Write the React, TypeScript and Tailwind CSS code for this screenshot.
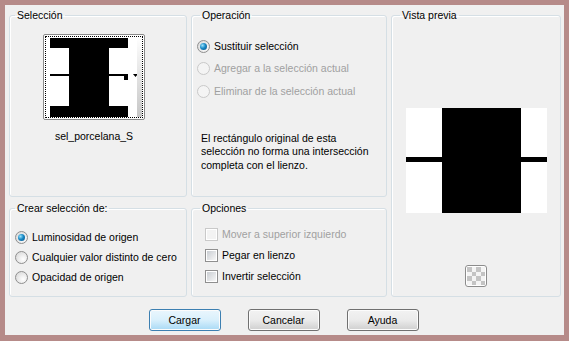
import React from "react";

const Radio = ({ checked, disabled }: { checked?: boolean; disabled?: boolean }) => (
  <span
    className={
      "flex items-center justify-center w-[13px] h-[13px] rounded-full border shrink-0 " +
      (disabled
        ? "border-[#c9c9c9] bg-[#f4f4f4]"
        : "border-[#8f8f8f] bg-[radial-gradient(circle_at_65%_65%,#ffffff,#dcdcdc_80%)]")
    }
  >
    {checked && (
      <span className="w-[7px] h-[7px] rounded-full bg-[radial-gradient(circle_at_35%_35%,#9be3fb,#1889c6_45%,#0a4d80)]" />
    )}
  </span>
);

const Checkbox = ({ disabled }: { disabled?: boolean }) => (
  <span
    className={
      "flex items-center justify-center w-[13px] h-[13px] border shrink-0 bg-white " +
      (disabled ? "border-[#c9c9c9]" : "border-[#8f8f8f]")
    }
  >
    <span
      className={
        "w-[9px] h-[9px] " +
        (disabled ? "bg-[#f3f3f3]" : "bg-linear-to-br from-[#c9cdd2] to-[#f7f7f7]")
      }
    />
  </span>
);

const Btn = ({ label, primary }: { label: string; primary?: boolean }) => (
  <button
    className={
      "w-[72px] h-[22px] rounded-[3px] border text-[10.5px] text-black shadow-[inset_0_0_0_1px_#fcfcfc] " +
      (primary
        ? "border-[#3c7fb1] bg-linear-to-b from-[#eaf6fd] via-[#d9f0fc] to-[#a7d9f5]"
        : "border-[#707070] bg-linear-to-b from-[#f2f2f2] via-[#ebebeb] to-[#cfcfcf]")
    }
  >
    {label}
  </button>
);

export default function App() {
  return (
    <div className="w-[569px] h-[341px] bg-[#b68b89] pt-[5px] pl-[5px] pr-[5px] pb-[6px] font-['Liberation_Sans',Arial,sans-serif] text-[10.5px] leading-[13px] text-black">
      <div className="flex flex-col h-full bg-[#f0f0f0] pl-[4px] pt-[4px]">
        <div className="grid grid-cols-[178px_196px_170px] grid-rows-[188px_95px] gap-x-[4px] gap-y-[5px]">
          {/* Selección */}
          <fieldset className="border border-[#d5dfe5] rounded-[3px] shadow-[inset_1px_1px_0_#fff] min-w-0">
            <legend className="ml-[5px] px-[2px] leading-[13px]">Selección</legend>
            <div className="flex flex-col items-center pr-[8px]">
              <div className="mt-[12px] w-[102px] h-[86px] border border-[#8a8a8a] rounded-[2px] bg-white p-[1px]">
                <div className="flex h-full border border-dotted border-black">
                  <div className="pl-[4px] pt-[1px]">
                    <svg width="78" height="79" viewBox="0 0 78 79">
                      <rect x="0" y="0" width="78" height="79" fill="#fff" />
                      <rect x="0" y="0" width="78" height="10" fill="#000" />
                      <rect x="19" y="0" width="40" height="79" fill="#000" />
                      <rect x="0" y="68" width="78" height="11" fill="#000" />
                      <rect x="0" y="36" width="78" height="2" fill="#000" />
                      <rect x="74" y="36" width="4" height="6" fill="#000" />
                    </svg>
                  </div>
                  <div className="ml-[5px] mt-[37px] flex flex-col items-center w-[6px]">
                    <svg width="5" height="3" viewBox="0 0 5 3">
                      <path d="M0 0h5L2.5 3z" fill="#000" />
                    </svg>
                  </div>
                  <div className="ml-[-1px] w-[5px] h-full bg-linear-to-b from-[#ffffff] to-[#c6c6c6]" />
                </div>
              </div>
              <div className="mt-[10px]">sel_porcelana_S</div>
            </div>
          </fieldset>

          {/* Operación */}
          <fieldset className="border border-[#d5dfe5] rounded-[3px] shadow-[inset_1px_1px_0_#fff] min-w-0">
            <legend className="ml-[8px] px-[2px] leading-[13px]">Operación</legend>
            <div className="flex flex-col mt-[13px] pl-[5px]">
              <div className="flex items-center gap-[4px] h-[22.5px]">
                <Radio checked />
                <span>Sustituir selección</span>
              </div>
              <div className="flex items-center gap-[4px] h-[22.5px] text-[#a0a0a0]">
                <Radio disabled />
                <span>Agregar a la selección actual</span>
              </div>
              <div className="flex items-center gap-[4px] h-[22.5px] text-[#a0a0a0]">
                <Radio disabled />
                <span>Eliminar de la selección actual</span>
              </div>
            </div>
            <p className="mt-[29px] pl-[9px] leading-[13.5px]">
              El rectángulo original de esta
              <br />
              selección no forma una intersección
              <br />
              completa con el lienzo.
            </p>
          </fieldset>

          {/* Vista previa */}
          <fieldset className="row-span-2 border border-[#d5dfe5] rounded-[3px] shadow-[inset_1px_1px_0_#fff] min-w-0">
            <legend className="ml-[8px] px-[2px] leading-[13px]">Vista previa</legend>
            <div className="flex flex-col items-center">
              <svg className="mt-[86px]" width="141" height="105" viewBox="0 0 141 105">
                <rect x="0" y="0" width="141" height="105" fill="#fff" />
                <rect x="36" y="0" width="79" height="105" fill="#000" />
                <rect x="0" y="49" width="141" height="5" fill="#000" />
              </svg>
              <div className="mt-[52px] w-[22px] h-[22px] rounded-[3px] border border-[#8c8c8c] bg-white p-[1px]">
                <svg width="18" height="18" viewBox="0 0 4 4" shapeRendering="crispEdges">
                  <rect width="4" height="4" fill="#f4f4f4" />
                  <rect x="0" y="0" width="1" height="1" fill="#c4c4c4" />
                  <rect x="2" y="0" width="1" height="1" fill="#c4c4c4" />
                  <rect x="1" y="1" width="1" height="1" fill="#c4c4c4" />
                  <rect x="3" y="1" width="1" height="1" fill="#c4c4c4" />
                  <rect x="0" y="2" width="1" height="1" fill="#c4c4c4" />
                  <rect x="2" y="2" width="1" height="1" fill="#c4c4c4" />
                  <rect x="1" y="3" width="1" height="1" fill="#c4c4c4" />
                  <rect x="3" y="3" width="1" height="1" fill="#c4c4c4" />
                </svg>
              </div>
            </div>
          </fieldset>

          {/* Crear selección de */}
          <fieldset className="border border-[#d5dfe5] rounded-[3px] shadow-[inset_1px_1px_0_#fff] min-w-0">
            <legend className="ml-[5px] px-[2px] leading-[13px]">Crear selección de:</legend>
            <div className="flex flex-col mt-[12px] pl-[5px]">
              <div className="flex items-center gap-[4px] h-[20px]">
                <Radio checked />
                <span>Luminosidad de origen</span>
              </div>
              <div className="flex items-center gap-[4px] h-[20px]">
                <Radio />
                <span>Cualquier valor distinto de cero</span>
              </div>
              <div className="flex items-center gap-[4px] h-[20px]">
                <Radio />
                <span>Opacidad de origen</span>
              </div>
            </div>
          </fieldset>

          {/* Opciones */}
          <fieldset className="border border-[#d5dfe5] rounded-[3px] shadow-[inset_1px_1px_0_#fff] min-w-0">
            <legend className="ml-[8px] px-[2px] leading-[13px]">Opciones</legend>
            <div className="flex flex-col mt-[9px] pl-[13px]">
              <div className="flex items-center gap-[4px] h-[21px] text-[#a0a0a0]">
                <Checkbox disabled />
                <span>Mover a superior izquierdo</span>
              </div>
              <div className="flex items-center gap-[4px] h-[21px]">
                <Checkbox />
                <span>Pegar en lienzo</span>
              </div>
              <div className="flex items-center gap-[4px] h-[21px]">
                <Checkbox />
                <span>Invertir selección</span>
              </div>
            </div>
          </fieldset>
        </div>

        <div className="flex justify-center gap-[27px] mt-[12px] pr-[6px]">
          <Btn label="Cargar" primary />
          <Btn label="Cancelar" />
          <Btn label="Ayuda" />
        </div>
      </div>
    </div>
  );
}
